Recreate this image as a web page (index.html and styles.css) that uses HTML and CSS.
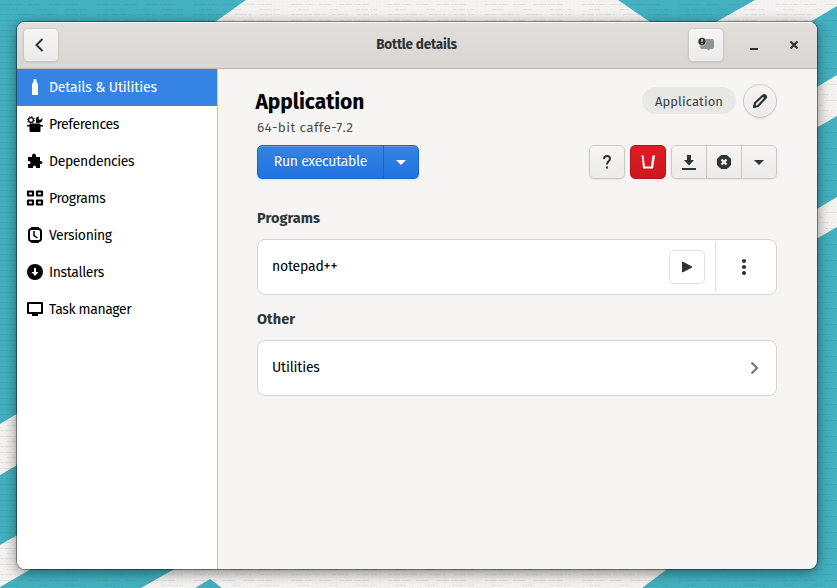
FILE: index.html
```html
<!DOCTYPE html>
<html lang="en">
<head>
<meta charset="utf-8">
<title>Bottle details</title>
<link rel="stylesheet" href="styles.css">
</head>
<body>
<svg class="wallpaper" width="837" height="588" viewBox="0 0 837 588" aria-hidden="true">
  <defs>
    <pattern id="grain" width="97" height="16" patternUnits="userSpaceOnUse">
      <path d="M0 4.5h23m5 0h12m9 0h31M7 9.5h11m20 0h9m18 0h21M0 14.5h35m6 0h17m8 0h20" stroke="#38442f" stroke-opacity=".1" stroke-dasharray="4 1 7 2 2 1"/>
      <path d="M0 1.5h97M0 6.5h97M0 11.5h97" stroke="#38442f" stroke-opacity=".03" stroke-dasharray="2 3 1 2"/>
    </pattern>
  </defs>
  <path fill="#43b1c1" d="M0 0h837v588H0z"/>
  <path fill="#f4f3f2" d="M246 0H618L650 22V60H160L215 22zM755 0H837V6L810 22 780 40H690L716 22zM837 75V116L790 143V103zM837 197V227L790 254V225zM0 424L50 394V446L0 475zM0 545L50 516V558L0 587zM141 588L190 560H679L642 588H222L210 579 195 588z"/>
  <path fill="url(#grain)" d="M0 0h837v588H0z"/>
</svg>
<div class="window">
  <header class="titlebar">
    <button class="btn back"><svg width="16" height="16" viewBox="0 0 16 16"><path d="M10.500 2L4.500 8l6 6" fill="none" stroke="#2e3436" stroke-width="2"/></svg></button>
    <h1 class="title">Bottle details</h1>
    <div class="controls">
      <button class="btn notice"><svg width="16" height="16" viewBox="0 0 16 16"><path d="M4 2h10q2 0 2 2v6q0 2-2 2h-2l-1.500 1.500L9 12H4q-2 0-2-2V4q0-2 2-2z" fill="#929595"/><circle cx="4" cy="4.500" r="4.300" fill="#f3f2f1"/><circle cx="4" cy="4.500" r="3.700" fill="#2e3436"/><path d="M4 2v3M4 6v1" stroke="#fff" stroke-width="1.200"/></svg></button>
      <svg class="minimize" width="16" height="16" viewBox="0 0 16 16"><path d="M4 11h8v2H4z" fill="#2e3436"/></svg>
      <svg class="close" width="16" height="16" viewBox="0 0 16 16"><path d="M4.500 4.500l7 7m0-7l-7 7" stroke="#2e3436" stroke-width="2.200"/></svg>
    </div>
  </header>
  <div class="body">
    <nav class="sidebar">
      <a class="item active"><svg viewBox="0 0 16 16"><path d="M5 16V6q0-2 1.500-3V1q0-1 1.500-1t1.500 1v2Q11 4 11 6v10z"/></svg><span>Details &amp; Utilities</span></a>
      <a class="item"><svg viewBox="0 0 16 16"><circle cx="4" cy="4" r="2.400" fill="none" stroke="currentColor" stroke-width="1.200"/><circle cx="4" cy="4" r="3.500" fill="none" stroke="currentColor" stroke-width="1" stroke-dasharray="1.200 1.550"/><path d="M9 7V4.500Q8 1 12 .5L11.500 3 13 4l2.500-2Q16 6 12 7zM0 9h2l1.500-1.500h9L14 9h2v1.500h-2.500V15q0 1-1 1h-9q-1 0-1-1v-4.500H0z"/></svg><span>Preferences</span></a>
      <a class="item"><svg viewBox="0 0 16 16"><path d="M1 4h4V3q0-2.500 2-2.500T9 3v1h4v4h.500Q15.500 8 15.500 9.500t-2 1.500H13v4H9v-1q0-1.500-1.500-1.500T6 14v1H1v-4h1q1.500 0 1.500-1.500T2 8H1z"/></svg><span>Dependencies</span></a>
      <a class="item"><svg viewBox="0 0 16 16"><path d="M1 1.500h5v4H1zM10 1.500h5v4h-5zM1 10.500h5v4H1zM10 10.500h5v4h-5z" fill="none" stroke="currentColor" stroke-width="2.200" stroke-linejoin="round"/></svg><span>Programs</span></a>
      <a class="item"><svg viewBox="0 0 16 16"><path d="M4 0h8v2H4zM4 14h8v2H4z"/><rect x="2" y="2" width="12" height="12" rx="2.500" fill="none" stroke="currentColor" stroke-width="2"/><path d="M7 4v4.500l3.500 2.500" fill="none" stroke="currentColor" stroke-width="1.500"/></svg><span>Versioning</span></a>
      <a class="item"><svg viewBox="0 0 16 16"><circle cx="8" cy="8" r="8"/><path d="M7 4h2v4h2.500L8 12 4.500 8H7z" fill="#fff"/></svg><span>Installers</span></a>
      <a class="item"><svg viewBox="0 0 16 16"><path d="M1 2h14v10H1z" fill="none" stroke="currentColor" stroke-width="2" stroke-linejoin="round"/><path d="M5 13h6v2H5z"/></svg><span>Task manager</span></a>
    </nav>
    <main class="content">
      <section class="heading">
        <div class="name"><h2>Application</h2><p>64-bit caffe-7.2</p></div>
        <span class="pill">Application</span>
        <button class="btn edit"><svg width="16" height="16" viewBox="0 0 16 16"><path d="M2 14L3 10 11 2.500Q12.200 1.500 13.500 2.700T13.500 5L6 13z" fill="none" stroke="#2e3436" stroke-width="2.200" stroke-linejoin="round"/><path d="M10 3l3 3 2-2-2-2.500zM1 15v-3l3 3z" fill="#2e3436"/></svg></button>
      </section>
      <section class="toolbar">
        <div class="split"><button class="run">Run executable</button><button class="drop"><svg width="16" height="16" viewBox="0 0 16 16"><path d="M3 6h10l-5 5z" fill="#fff"/></svg></button></div>
        <button class="btn tool"><svg width="16" height="16" viewBox="0 0 16 16"><path d="M5 5Q5 2 8 2t3 2.700C11 7 8 7 8 10.500" fill="none" stroke="#2e3436" stroke-width="2"/><path d="M7 12.500h2v2H7z" fill="#2e3436"/></svg></button>
        <button class="tool danger"><svg width="16" height="16" viewBox="0 0 16 16"><path d="M1 1.500h2.500L5 12.500h6l1.500-11H15L13 14.500H3L2 3z" fill="#fff"/></svg></button>
        <div class="group">
          <button><svg width="16" height="16" viewBox="0 0 16 16"><path d="M6 1h4v5h3L8 11.500 3 6h3zM1 14h14v2H1z" fill="#2e3436"/></svg></button>
          <button><svg width="16" height="16" viewBox="0 0 16 16"><path d="M5 1.500h6L14.500 5v6L11 14.500H5L1.500 11V5z" fill="#2e3436" stroke="#2e3436" stroke-linejoin="round"/><path d="M5.500 5.500l5 5m0-5l-5 5" stroke="#f2f1f0" stroke-width="2.200"/></svg></button>
          <button><svg width="16" height="16" viewBox="0 0 16 16"><path d="M3 6h10l-5 5z" fill="#2e3436"/></svg></button>
        </div>
      </section>
      <h3>Programs</h3>
      <div class="card">
        <span class="label">notepad++</span>
        <button class="play"><svg width="16" height="16" viewBox="0 0 16 16"><path d="M3.500 3l9.500 5-9.500 5z" fill="#2e3436" stroke="#2e3436" stroke-linejoin="round"/></svg></button>
        <i class="divider"></i>
        <svg class="more" width="16" height="16" viewBox="0 0 16 16"><g fill="#2e3436"><circle cx="8" cy="2" r="2.100"/><circle cx="8" cy="8" r="2.100"/><circle cx="8" cy="14" r="2.100"/></g></svg>
      </div>
      <h3>Other</h3>
      <div class="card">
        <span class="label">Utilities</span>
        <svg class="chevron" width="16" height="16" viewBox="0 0 16 16"><path d="M5.500 2.500L11 8l-5.500 5.500" fill="none" stroke="#777" stroke-width="2.200"/></svg>
      </div>
    </main>
  </div>
</div>
</body>
</html>
```
FILE: styles.css
```css
* { box-sizing: border-box; }
body { margin: 0; width: 837px; height: 588px; overflow: hidden; padding: 22px 20px 19px 17px; font: 14px/20px "Fira Sans", "Open Sans", "Noto Sans", sans-serif; font-stretch: 85%; color: #111; }
button { margin: 0; padding: 0; font: inherit; letter-spacing: inherit; display: flex; align-items: center; justify-content: center; flex: none; }
svg { display: block; flex: none; overflow: visible; }
h1, h2, h3, p { margin: 0; white-space: nowrap; }
.wallpaper { position: absolute; left: 0; top: 0; z-index: -1; }
.window { height: 547px; border-radius: 8px; overflow: hidden; background: #f6f5f4; box-shadow: 0 0 0 1px rgba(0,0,0,.38), 0 3px 14px rgba(0,0,0,.5); display: flex; flex-direction: column; }
.titlebar { height: 47px; flex: none; display: grid; grid-template-columns: 1fr auto 1fr; align-items: center; padding: 0 15px 1px 6px; background: linear-gradient(#e1dedb, #dad6d2); border-bottom: 1px solid #bfb8b1; box-shadow: inset 0 1px #f9f8f8; }
.title { font-size: 13.500px; line-height: 20px; font-weight: 700; letter-spacing: -.2px; color: #2e3436; transform: translateX(4px); }
.controls { display: flex; align-items: center; justify-content: flex-end; }
.btn { border: 1px solid #cdc7c2; border-radius: 5px; background: linear-gradient(#f6f5f4, #edebe9); box-shadow: inset 0 1px #fff, 0 1px 2px rgba(0,0,0,.07); }
.back, .notice { width: 36px; height: 34px; }
.back svg { margin-right: 3px; }
.minimize { margin-left: 22px; }
.close { margin-left: 24px; }
.body { flex: 1; display: flex; min-height: 0; }
.sidebar { width: 201px; flex: none; background: #fff; border-right: 1px solid #cdc7c2; }
.item { height: 37px; display: flex; align-items: center; gap: 6px; padding-left: 10px; color: #000; white-space: nowrap; letter-spacing: -.38px; }
.item svg { width: 16px; height: 16px; margin-bottom: 1px; fill: currentColor; }
.item.active { background: #3584e4; color: #fff; letter-spacing: -.16px; }
.content { flex: 1; padding: 15px 40px 0 39px; }
.heading { display: flex; align-items: flex-start; height: 61px; }
.name { flex: 1; }
.name h2 { font-size: 21px; line-height: 36px; font-weight: 700; letter-spacing: -.05px; color: #000; margin-left: -1.500px; }
.name p { font-size: 13.500px; line-height: 15px; letter-spacing: .35px; color: #4a4f51; }
.pill { height: 27px; width: 94px; margin: 3px 7px 0 0; padding-top: 2px; border-radius: 14px; background: #e8e8e6; display: flex; align-items: center; justify-content: center; font-size: 13px; letter-spacing: .1px; color: #3c4042; white-space: nowrap; }
.edit { width: 34px; height: 34px; border-radius: 50%; }
.toolbar { display: flex; height: 34px; }
.split { display: flex; width: 162px; margin-right: auto; border: 1px solid #1b66c6; border-radius: 5px; background: linear-gradient(#3584e4, #2074df); box-shadow: inset 0 1px #589aea, 0 1px 2px rgba(0,0,0,.08); }
.split button { border: 0; background: none; color: #fff; white-space: nowrap; text-shadow: 0 -1px rgba(0,0,0,.25); }
.split .run { width: 125px; letter-spacing: -.3px; }
.split .drop { flex: 1; border-left: 1px solid #1b66c6; padding-right: 1px; }
.tool { width: 36px; margin-right: 5px; }
.danger { border: 1px solid #b2161d; border-radius: 5px; background: linear-gradient(#e01b24, #cb1820); }
.group { display: flex; width: 106px; border: 1px solid #cdc7c2; border-radius: 5px; background: linear-gradient(#f6f5f4, #edebe9); box-shadow: inset 0 1px #fff, 0 1px 2px rgba(0,0,0,.07); }
.group button { flex: 1; border: 0; background: none; }
.group button + button { border-left: 1px solid #cdc7c2; }
h3 { font-size: 14.500px; line-height: 20px; font-weight: 700; letter-spacing: .05px; color: #2e3436; }
.toolbar + h3 { margin-top: 29px; }
.card + h3 { margin-top: 14px; }
.card { height: 56px; margin-top: 11px; border: 1px solid #d8d4d0; border-radius: 8px; background: #fff; display: flex; align-items: center; padding-left: 14px; }
.label { flex: 1; color: #000; letter-spacing: -.2px; }
.play { width: 36px; height: 34px; border: 1px solid #e4e1df; border-radius: 5px; background: #fff; margin-right: 10px; }
.divider { width: 1px; height: 50px; background: #dfdcd9; }
.more { margin: 0 24px 0 20px; }
.chevron { margin-right: 14px; }
```
